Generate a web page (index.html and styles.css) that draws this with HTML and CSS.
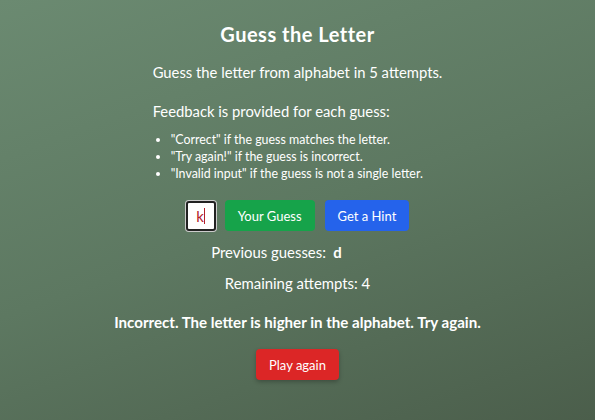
FILE: index.html
```html
<!DOCTYPE html>
<html>
<head>
<meta charset="utf-8">
<link rel="stylesheet" href="styles.css">
</head>
<body>
<main class="game">
  <h1 class="title">Guess the Letter</h1>
  <div class="intro">
    <p class="lead">Guess the letter from alphabet in 5 attempts.</p>
    <p class="lead fb">Feedback is provided for each guess:</p>
    <ul class="rules">
      <li>"Correct" if the guess matches the letter.</li>
      <li>"Try again!" if the guess is incorrect.</li>
      <li>"Invalid input" if the guess is not a single letter.</li>
    </ul>
  </div>
  <div class="controls">
    <div class="input"><span class="val">k</span><span class="caret"></span></div>
    <button class="btn green">Your Guess</button>
    <button class="btn blue">Get a Hint</button>
  </div>
  <p class="prev">Previous guesses: <b>&nbsp;d</b></p>
  <p class="remain">Remaining attempts: 4</p>
  <p class="msg">Incorrect. The letter is higher in the alphabet. Try again.</p>
  <button class="btn red">Play again</button>
</main>
</body>
</html>
```
FILE: styles.css
```css
html, body { margin: 0; height: 100%; }
body {
  background: linear-gradient(160deg, #6b8a71 0%, #5d7861 50%, #4b5e4b 100%);
  font-family: Lato, "Open Sans", sans-serif;
  color: #fff;
}
.game {
  display: flex;
  flex-direction: column;
  align-items: center;
  padding-top: 22px;
}
.title {
  margin: 0;
  font-size: 20px;
  font-weight: 700;
  letter-spacing: 0.5px;
  line-height: 24px;
}
.intro { margin-top: 15px; }
.lead { margin: 0; font-size: 14.8px; line-height: 22px; }
.fb { margin-top: 17px; }
.rules {
  margin: 9px 0 0;
  padding-left: 18px;
  font-size: 12.4px;
  line-height: 17px;
}
.controls {
  display: flex;
  align-items: center;
  gap: 9px;
  margin-top: 18px;
}
.input {
  width: 26px; height: 26px;
  border: 2px solid #222;
  border-radius: 3px;
  box-shadow: 0 0 0 1px #ccc;
  background: #fff;
  display: flex; align-items: center; justify-content: center;
  color: #b3202a;
  font-size: 15px;
}
.caret { width: 1px; height: 16px; background: #b3202a; }
.btn {
  border: none;
  border-radius: 4px;
  color: #fff;
  font-family: inherit;
  font-size: 13px;
  height: 31px;
  padding: 0 13px;
}
.blue { margin-left: 1px; }
.green { background: #16a34a; }
.blue { background: #2563eb; }
.red { background: #dc2626; box-shadow: 0 2px 4px rgba(0,0,0,0.25); margin-top: 16px; padding: 0 13px; }
.prev { margin: 10px 42px 0 0; font-size: 14.9px; line-height: 22px; }
.prev b { font-weight: 700; }
.remain { margin: 9px 0 0; font-size: 14.9px; line-height: 22px; }
.msg { margin: 17px 0 0; font-size: 15.1px; font-weight: 700; line-height: 22px; }
```
